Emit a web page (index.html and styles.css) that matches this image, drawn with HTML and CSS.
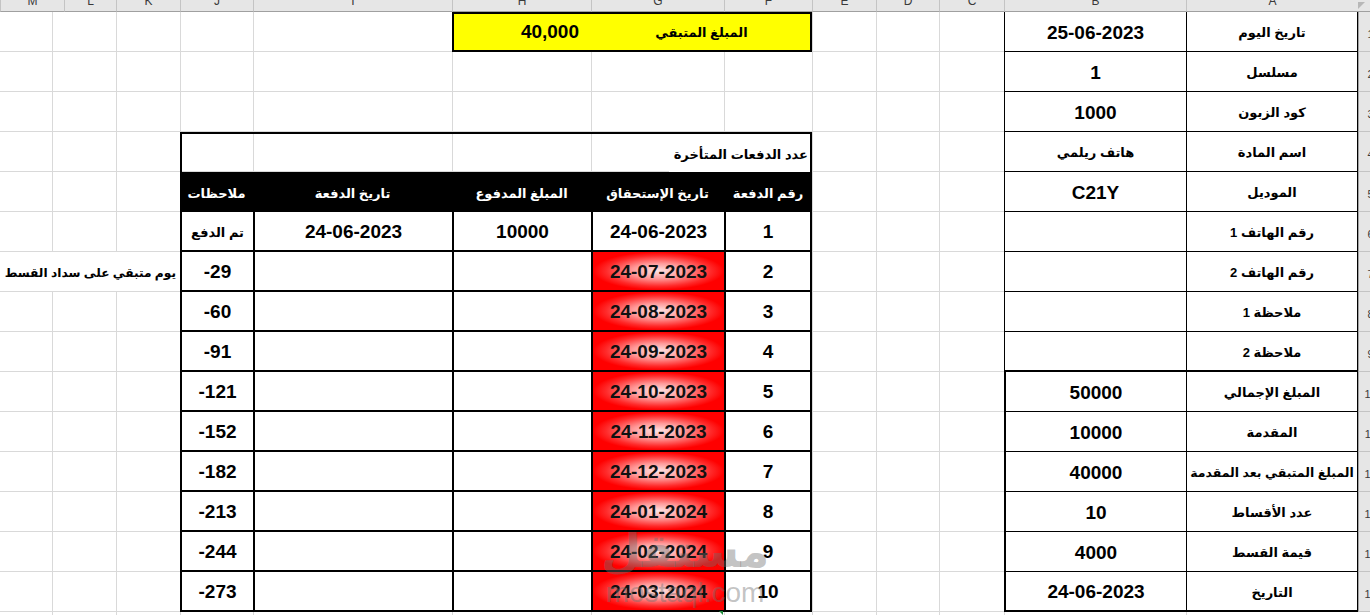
FILE: index.html
```html
<!DOCTYPE html>
<html lang="ar">
<head>
<meta charset="utf-8">
<title>جدول الأقساط</title>
<link rel="stylesheet" href="styles.css">
</head>
<body>
<div class="sheet">
  <div class="corner"></div>
  <div class="colhead cA"><span>A</span></div>
  <div class="colhead cB"><span>B</span></div>
  <div class="colhead cC"><span>C</span></div>
  <div class="colhead cD"><span>D</span></div>
  <div class="colhead cE"><span>E</span></div>
  <div class="colhead cF"><span>F</span></div>
  <div class="colhead cG"><span>G</span></div>
  <div class="colhead cH"><span>H</span></div>
  <div class="colhead cI"><span>I</span></div>
  <div class="colhead cJ"><span>J</span></div>
  <div class="colhead cK"><span>K</span></div>
  <div class="colhead cL"><span>L</span></div>
  <div class="colhead cM"><span>M</span></div>

  <div class="rowhead r1"><span>1</span></div>
  <div class="rowhead r2"><span>2</span></div>
  <div class="rowhead r3"><span>3</span></div>
  <div class="rowhead r4"><span>4</span></div>
  <div class="rowhead r5"><span>5</span></div>
  <div class="rowhead r6"><span>6</span></div>
  <div class="rowhead r7"><span>7</span></div>
  <div class="rowhead r8"><span>8</span></div>
  <div class="rowhead r9"><span>9</span></div>
  <div class="rowhead r10"><span>10</span></div>
  <div class="rowhead r11"><span>11</span></div>
  <div class="rowhead r12"><span>12</span></div>
  <div class="rowhead r13"><span>13</span></div>
  <div class="rowhead r14"><span>14</span></div>
  <div class="rowhead r15"><span>15</span></div>

  <!-- customer info table (A:B) -->
  <div class="c rt t cA r1">تاريخ اليوم</div><div class="c rt n cB r1">25-06-2023</div>
  <div class="c rt t cA r2">مسلسل</div><div class="c rt n cB r2">1</div>
  <div class="c rt t cA r3">كود الزبون</div><div class="c rt n cB r3">1000</div>
  <div class="c rt t cA r4">اسم المادة</div><div class="c rt t cB r4">هاتف ريلمي</div>
  <div class="c rt t cA r5">الموديل</div><div class="c rt n cB r5">C21Y</div>
  <div class="c rt t cA r6">رقم الهاتف 1</div><div class="c rt cB r6"></div>
  <div class="c rt t cA r7">رقم الهاتف 2</div><div class="c rt cB r7"></div>
  <div class="c rt t cA r8">ملاحظة 1</div><div class="c rt cB r8"></div>
  <div class="c rt t cA r9 sep">ملاحظة 2</div><div class="c rt cB r9 sep"></div>
  <div class="c rt t cA r10">المبلغ الإجمالي</div><div class="c rt n cB r10 thick">50000</div>
  <div class="c rt t cA r11">المقدمة</div><div class="c rt n cB r11 thick">10000</div>
  <div class="c rt t long cA r12">المبلغ المتبقي بعد المقدمة</div><div class="c rt n cB r12 thick">40000</div>
  <div class="c rt t cA r13">عدد الأقساط</div><div class="c rt n cB r13 thick">10</div>
  <div class="c rt t cA r14">قيمة القسط</div><div class="c rt n cB r14 thick">4000</div>
  <div class="c rt t cA r15 sep">التاريخ</div><div class="c rt n cB r15 thick sep">24-06-2023</div>

  <!-- remaining amount box -->
  <div class="remain r1">
    <div class="c t">المبلغ المتبقي</div>
    <div class="c n remain-val">40,000</div>
  </div>

  <!-- payments table (F:J) -->
  <div class="mtitle r4"><span class="t">عدد الدفعات المتأخرة</span></div>

  <div class="c mh t cF r5">رقم الدفعة</div>
  <div class="c mh t cG r5">تاريخ الإستحقاق</div>
  <div class="c mh t cH r5">المبلغ المدفوع</div>
  <div class="c mh t cI r5">تاريخ الدفعة</div>
  <div class="c mh t cJ r5">ملاحظات</div>

  <div class="c mt n cF r6">1</div><div class="c mt n cG r6">24-06-2023</div><div class="c mt n cH r6">10000</div><div class="c mt n cI r6">24-06-2023</div><div class="c mt t cJ r6">تم الدفع</div>
  <div class="c mt n cF r7">2</div><div class="c mt n due cG r7">24-07-2023</div><div class="c mt cH r7"></div><div class="c mt cI r7"></div><div class="c mt n cJ r7">-29</div>
  <div class="c mt n cF r8">3</div><div class="c mt n due cG r8">24-08-2023</div><div class="c mt cH r8"></div><div class="c mt cI r8"></div><div class="c mt n cJ r8">-60</div>
  <div class="c mt n cF r9">4</div><div class="c mt n due cG r9">24-09-2023</div><div class="c mt cH r9"></div><div class="c mt cI r9"></div><div class="c mt n cJ r9">-91</div>
  <div class="c mt n cF r10">5</div><div class="c mt n due cG r10">24-10-2023</div><div class="c mt cH r10"></div><div class="c mt cI r10"></div><div class="c mt n cJ r10">-121</div>
  <div class="c mt n cF r11">6</div><div class="c mt n due cG r11">24-11-2023</div><div class="c mt cH r11"></div><div class="c mt cI r11"></div><div class="c mt n cJ r11">-152</div>
  <div class="c mt n cF r12">7</div><div class="c mt n due cG r12">24-12-2023</div><div class="c mt cH r12"></div><div class="c mt cI r12"></div><div class="c mt n cJ r12">-182</div>
  <div class="c mt n cF r13">8</div><div class="c mt n due cG r13">24-01-2024</div><div class="c mt cH r13"></div><div class="c mt cI r13"></div><div class="c mt n cJ r13">-213</div>
  <div class="c mt n cF r14">9</div><div class="c mt n due cG r14">24-02-2024</div><div class="c mt cH r14"></div><div class="c mt cI r14"></div><div class="c mt n cJ r14">-244</div>
  <div class="c mt n cF r15">10</div><div class="c mt n due cG r15">24-03-2024</div><div class="c mt cH r15"></div><div class="c mt cI r15"></div><div class="c mt n cJ r15">-273</div>

  <div class="c note t r7">يوم متبقي على سداد القسط</div>

  <div class="err"></div>
  <div class="wm">
    <div class="wm-ar">مستقل</div>
    <div class="wm-en">mostaql.com</div>
  </div>
</div>
</body>
</html>
```

FILE: styles.css
```css
* { box-sizing: border-box; }

html, body {
  margin: 0;
  padding: 0;
  background: #fff;
  overflow: hidden;
}

body {
  width: 1370px;
  height: 615px;
}

.sheet {
  position: relative;
  display: grid;
  direction: rtl;
  width: 1370px;
  height: 615px;
  overflow: hidden;
  grid-template-columns: 12px 172px 182px 65px 63px 64px 88px 133px 139px 199px 73px 64px 52px;
  grid-template-rows: 12px repeat(15, 40px) 3px;
  font-family: "Liberation Sans", "DejaVu Sans", Arial, sans-serif;
  color: #000;
  background:
    linear-gradient(#d9d9d9, #d9d9d9) 52px 12px / 1px 640px no-repeat,
    linear-gradient(#d9d9d9, #d9d9d9) 116px 12px / 1px 640px no-repeat,
    linear-gradient(#d9d9d9, #d9d9d9) 180px 12px / 1px 640px no-repeat,
    linear-gradient(#d9d9d9, #d9d9d9) 253px 12px / 1px 640px no-repeat,
    linear-gradient(#d9d9d9, #d9d9d9) 452px 12px / 1px 640px no-repeat,
    linear-gradient(#d9d9d9, #d9d9d9) 591px 12px / 1px 640px no-repeat,
    linear-gradient(#d9d9d9, #d9d9d9) 724px 12px / 1px 640px no-repeat,
    linear-gradient(#d9d9d9, #d9d9d9) 812px 12px / 1px 640px no-repeat,
    linear-gradient(#d9d9d9, #d9d9d9) 876px 12px / 1px 640px no-repeat,
    linear-gradient(#d9d9d9, #d9d9d9) 939px 12px / 1px 640px no-repeat,
    linear-gradient(#d9d9d9, #d9d9d9) 1004px 12px / 1px 640px no-repeat,
    linear-gradient(#d9d9d9, #d9d9d9) 1186px 12px / 1px 640px no-repeat,
    repeating-linear-gradient(to bottom, transparent 0 39px, #d9d9d9 39px 40px) 0 12px / 100% 640px no-repeat,
    #fff;
}

/* grid placement */
.cA { grid-column: 2; }
.cB { grid-column: 3; }
.cC { grid-column: 4; }
.cD { grid-column: 5; }
.cE { grid-column: 6; }
.cF { grid-column: 7; }
.cG { grid-column: 8; }
.cH { grid-column: 9; }
.cI { grid-column: 10; }
.cJ { grid-column: 11; }
.cK { grid-column: 12; }
.cL { grid-column: 13; }
.cM { grid-column: 14; }

.r1 { grid-row: 2; }
.r2 { grid-row: 3; }
.r3 { grid-row: 4; }
.r4 { grid-row: 5; }
.r5 { grid-row: 6; }
.r6 { grid-row: 7; }
.r7 { grid-row: 8; }
.r8 { grid-row: 9; }
.r9 { grid-row: 10; }
.r10 { grid-row: 11; }
.r11 { grid-row: 12; }
.r12 { grid-row: 13; }
.r13 { grid-row: 14; }
.r14 { grid-row: 15; }
.r15 { grid-row: 16; }

/* headers */
.corner {
  grid-column: 1;
  grid-row: 1;
  background: #e6e6e6;
  border-bottom: 1px solid #a0a0a0;
  display: flex;
  align-items: flex-end;
  justify-content: flex-end;
  padding: 0 2px 2px 0;
}
.corner::after {
  content: "";
  border-style: solid;
  border-width: 0 0 7px 7px;
  border-color: transparent transparent transparent #b8b8b8;
}

.colhead {
  grid-row: 1;
  background: #e6e6e6;
  border-left: 1px solid #c4c4c4;
  border-bottom: 1px solid #a0a0a0;
  overflow: hidden;
  text-align: center;
  font-family: "Liberation Sans", Arial, sans-serif;
  font-size: 12px;
  line-height: 12px;
  color: #3a3a3a;
}
.colhead span {
  display: block;
  margin-top: -5px;
}

.rowhead {
  grid-column: 1;
  background: #e6e6e6;
  border-left: 1px solid #a0a0a0;
  border-bottom: 1px solid #c4c4c4;
  direction: ltr;
  display: flex;
  align-items: center;
  padding-top: 4px;
  font-family: "Liberation Sans", Arial, sans-serif;
  font-size: 11px;
  color: #3a3a3a;
}
.rowhead span {
  flex: none;
  width: 23px;
  text-align: center;
}

/* generic cell */
.c {
  display: flex;
  align-items: center;
  justify-content: center;
  padding-top: 2px;
  font-weight: bold;
  white-space: nowrap;
}
.n {
  font-size: 19px;
  direction: ltr;
}
.t {
  font-size: 13px;
  font-weight: bold;
}
.t.long { font-size: 12.5px; }

/* customer info table */
.rt {
  background: #fff;
  border-left: 1px solid #000;
  border-bottom: 1px solid #000;
}
.rt.cA { border-right: 1px solid #000; }
.rt.sep { border-bottom-width: 2px; }
.rt.thick { border-left-width: 2px; }

/* remaining amount */
.remain {
  grid-column: 7 / 10;
  display: grid;
  grid-template-columns: 217px 1fr;
  background: #ffff00;
  border: 2px solid #000;
}
.remain .c { padding-top: 0; }
.remain-val {
  justify-content: flex-end;
  padding-right: 14px;
}

/* payments table */
.mtitle {
  grid-column: 7 / 12;
  display: flex;
  border: 2px solid #000;
  border-bottom: 0;
}
.mtitle span {
  display: flex;
  align-items: center;
  padding: 2px 2px 0 5px;
  background: #fff;
  white-space: nowrap;
}

.mh {
  background: #000;
  color: #fff;
}

.mt {
  background: #fff;
  border-left: 2px solid #000;
  border-bottom: 2px solid #000;
}
.mt.cF { border-right: 2px solid #000; }

.mt.due {
  color: #111;
  background: radial-gradient(ellipse 50% 50% at 50% 50%, #ffe4e4 0%, #ff9a9a 40%, #ff2a2a 80%, #ff0000 100%);
}

.note {
  grid-column: 12 / 15;
  justify-content: flex-start;
  padding-right: 4px;
  background: #fff;
  border-bottom: 1px solid #d9d9d9;
}
.t.note { font-size: 12.2px; }

/* overlays */
.err {
  position: absolute;
  left: 719px;
  top: 611px;
  width: 0;
  height: 0;
  border-top: 4px solid #1f8a3b;
  border-left: 4px solid transparent;
}

.wm {
  position: absolute;
  left: 685px;
  top: 522px;
  transform: translateX(-50%);
  display: flex;
  flex-direction: column;
  align-items: center;
  color: rgba(110, 110, 110, 0.42);
  pointer-events: none;
  white-space: nowrap;
}
.wm-ar {
  font-family: "DejaVu Sans", sans-serif;
  font-size: 46px;
  font-weight: bold;
  line-height: 58px;
}
.wm-en {
  direction: ltr;
  font-family: "Liberation Sans", Arial, sans-serif;
  font-size: 28px;
  line-height: 26px;
}
```
